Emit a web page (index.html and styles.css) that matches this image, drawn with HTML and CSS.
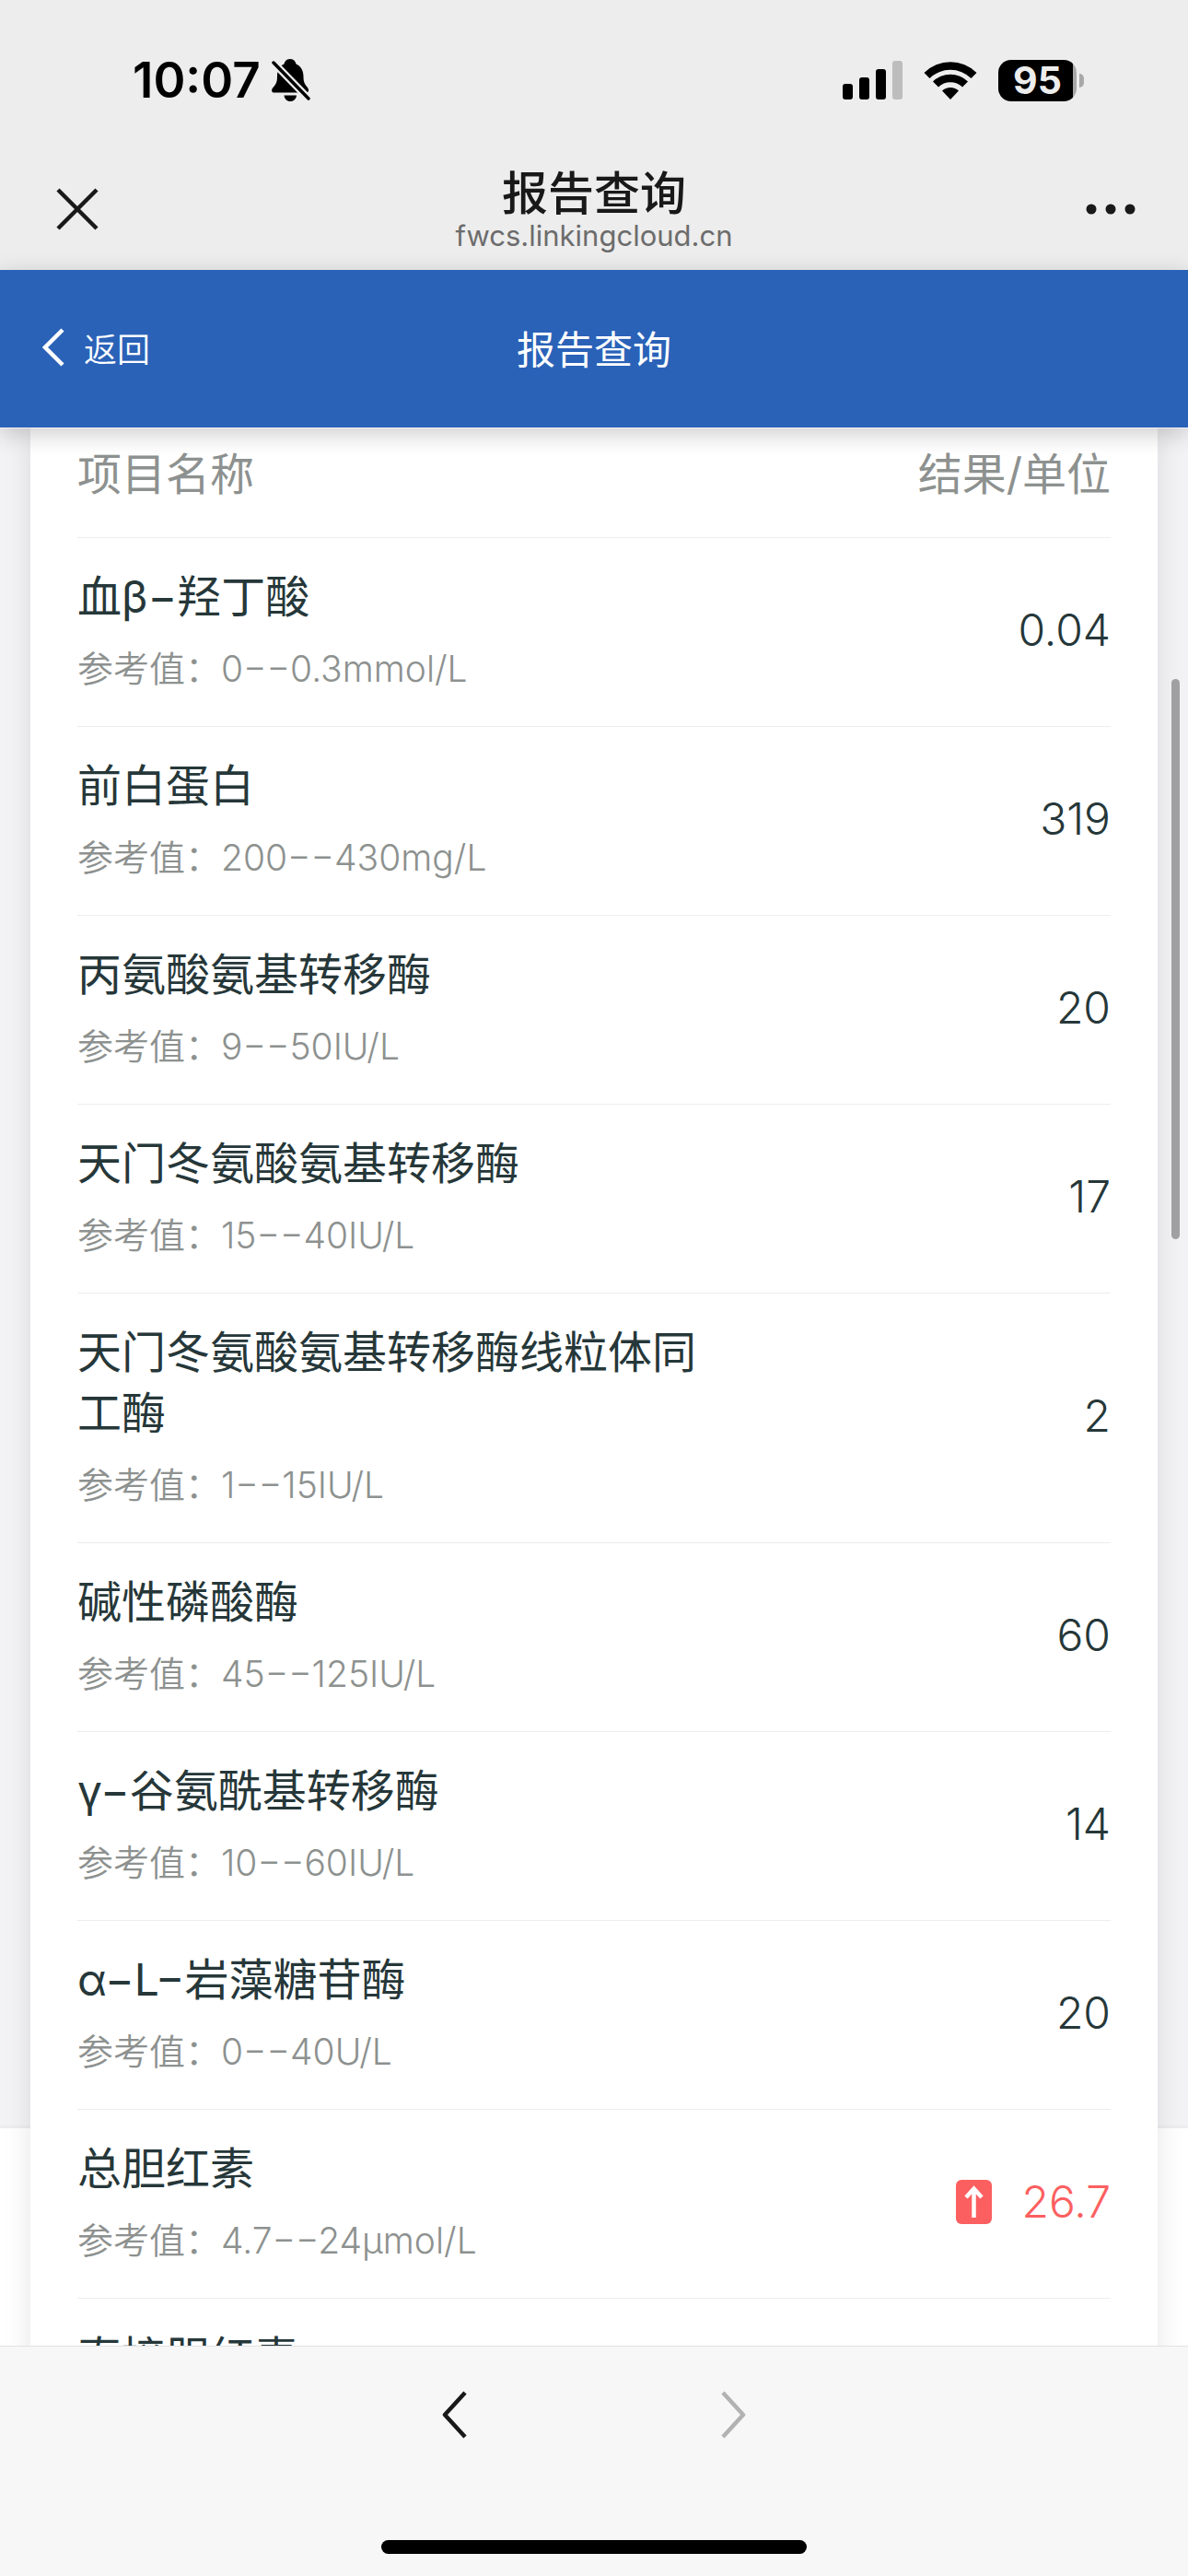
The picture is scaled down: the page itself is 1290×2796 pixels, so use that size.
FILE: index.html
```html
<!DOCTYPE html>
<html lang="zh-CN">
<head>
<meta charset="utf-8">
<meta name="viewport" content="width=device-width, initial-scale=1">
<title>报告查询</title>
<link rel="stylesheet" href="styles.css">
</head>
<body>
<div class="screen">
  <div class="status-bar">
    <div class="status-left">
      <span class="clock">10:07</span>
      <svg class="bell" width="42" height="46" viewBox="0 0 42 46" aria-label="静音">
        <path d="M20 0C16 0 14 3 13.500 5.500C8 8 6 13 6 19C6 26 4 28 1.500 31C-1 34 0 36.500 3 36.500H37C40 36.500 41 34 39 31C36.500 28 34.500 26 34.500 19C34.500 13 32 8 26.500 5.500C26 3 24 0 20 0Z"/>
        <path d="M13.500 39.500H27C26.500 43.500 24 46 20.200 46C16.500 46 14 43.500 13.500 39.500Z"/>
        <path d="M1 3L41 44" fill="none" stroke="#ededed" stroke-width="8"/>
        <path d="M2 4L40 43" fill="none" stroke="#000" stroke-width="3.500" stroke-linecap="round"/>
      </svg>
    </div>
    <div class="status-right">
      <svg width="65" height="42" viewBox="0 0 65 42" aria-label="信号">
        <rect x="0" y="25" width="11" height="17" rx="3"/>
        <rect x="18" y="18" width="11" height="24" rx="3"/>
        <rect x="36" y="9" width="11" height="33" rx="3"/>
        <rect x="54" y="0" width="11" height="42" rx="3" fill="#bdbdbd"/>
      </svg>
      <svg width="58" height="42" viewBox="0 0 58 42" aria-label="无线网络">
        <path d="M0.500 13A40.500 40.500 0 0 1 57.500 13L51.500 19A32 32 0 0 0 6.500 19Z"/>
        <path d="M10 22.500A27 27 0 0 1 48 22.500L42 28.500A18.500 18.500 0 0 0 16 28.500Z"/>
        <path d="M20 32.500A13 13 0 0 1 38 32.500L29 42Z"/>
      </svg>
      <div class="battery"><span class="battery-body">95</span><span class="battery-cap"></span></div>
    </div>
  </div>

  <div class="nav-bar">
    <button class="icon-button" type="button" aria-label="关闭">
      <svg width="46" height="46" viewBox="0 0 46 46" fill="none" stroke="#191919" stroke-width="4.500"><path d="M2 2L44 44M44 2L2 44"/></svg>
    </button>
    <div class="nav-title">
      <div class="page-name">报告查询</div>
      <div class="page-host">fwcs.linkingcloud.cn</div>
    </div>
    <button class="icon-button" type="button" aria-label="更多">
      <svg width="54" height="12" viewBox="0 0 54 12" fill="#191919"><circle cx="6" cy="6" r="5.500"/><circle cx="27" cy="6" r="5.500"/><circle cx="48" cy="6" r="5.500"/></svg>
    </button>
  </div>

  <header class="app-bar">
    <a class="back-link" href="#">
      <svg width="24" height="42" viewBox="0 0 24 42" fill="none" stroke="#fff" stroke-width="4.500"><path d="M22 2L3 21L22 40"/></svg>
      返回
    </a>
    <h1 class="app-title">报告查询</h1>
  </header>

  <main class="report">
    <div class="card">
      <table class="results">
        <thead>
          <tr><th scope="col">项目名称</th><th scope="col">结果/单位</th></tr>
        </thead>
        <tbody>
          <tr><td><div class="name">血β−羟丁酸</div><div class="range">参考值：0−−0.3mmol/L</div></td><td>0.04</td></tr>
          <tr><td><div class="name">前白蛋白</div><div class="range">参考值：200−−430mg/L</div></td><td>319</td></tr>
          <tr><td><div class="name">丙氨酸氨基转移酶</div><div class="range">参考值：9−−50IU/L</div></td><td>20</td></tr>
          <tr><td><div class="name">天门冬氨酸氨基转移酶</div><div class="range">参考值：15−−40IU/L</div></td><td>17</td></tr>
          <tr><td><div class="name">天门冬氨酸氨基转移酶线粒体同工酶</div><div class="range">参考值：1−−15IU/L</div></td><td>2</td></tr>
          <tr><td><div class="name">碱性磷酸酶</div><div class="range">参考值：45−−125IU/L</div></td><td>60</td></tr>
          <tr><td><div class="name">γ−谷氨酰基转移酶</div><div class="range">参考值：10−−60IU/L</div></td><td>14</td></tr>
          <tr><td><div class="name">α−L−岩藻糖苷酶</div><div class="range">参考值：0−−40U/L</div></td><td>20</td></tr>
          <tr><td><div class="name">总胆红素</div><div class="range">参考值：4.7−−24μmol/L</div></td><td>
            <div class="flagged">
              <svg width="39" height="48" viewBox="0 0 39 48" aria-label="偏高"><rect width="39" height="48" rx="6" fill="#fc5f60"/><path d="M19.500 41V10M11 19L19.500 9.500L28 19" fill="none" stroke="#fff" stroke-width="4.500"/></svg>
              26.7
            </div></td></tr>
          <tr><td><div class="name">直接胆红素</div></td><td></td></tr>
        </tbody>
      </table>
    </div>
    <div class="scroll-thumb"></div>
  </main>

  <footer class="tool-bar">
    <div class="tool-buttons">
      <button class="tool-button" type="button" aria-label="后退">
        <svg width="27" height="52" viewBox="0 0 27 52" fill="none" stroke="#191919" stroke-width="4.500" stroke-linejoin="round"><path d="M25 2L3 26L25 50"/></svg>
      </button>
      <button class="tool-button" type="button" aria-label="前进" disabled>
        <svg width="27" height="52" viewBox="0 0 27 52" fill="none" stroke="#b2b2b2" stroke-width="4.500" stroke-linejoin="round"><path d="M2 2L24 26L2 50"/></svg>
      </button>
    </div>
    <div class="home-indicator"></div>
  </footer>
</div>
</body>
</html>
```
FILE: styles.css
```css
* { box-sizing: border-box; }

body {
  margin: 0;
  font-family: Inter, "Noto Sans CJK SC", sans-serif;
  color: #263739;
  background: #fff;
}

svg { display: block; flex: none; }

.screen {
  display: flex;
  flex-direction: column;
  height: 100vh;
  overflow: hidden;
}

/* Phone status bar */
.status-bar {
  flex: none;
  display: flex;
  justify-content: space-between;
  align-items: center;
  height: 161px;
  padding: 13px 113px 0 144px;
  background: #ededed;
  color: #000;
}
.status-left { display: flex; align-items: center; gap: 12px; }
.status-right { display: flex; align-items: center; gap: 23px; }
.clock { font-size: 53px; font-weight: 600; line-height: 60px; }
.battery { display: flex; align-items: center; gap: 3px; }
.battery-body {
  width: 85px;
  height: 45px;
  border-radius: 14px;
  background: linear-gradient(to right, #000 81px, #a8a8a8 81px);
  color: #ededed;
  font-size: 41px;
  font-weight: 700;
  line-height: 45px;
  text-align: center;
}
.battery-cap { width: 5px; height: 15px; border-radius: 0 5px 5px 0; background: #a8a8a8; }

/* Browser title bar */
.nav-bar {
  flex: none;
  display: flex;
  justify-content: space-between;
  align-items: center;
  height: 132px;
  padding: 0 54px;
  background: #ededed;
}
.icon-button,
.tool-button { padding: 0; border: 0; background: none; }
.icon-button { display: flex; justify-content: center; width: 60px; }
.nav-title { text-align: center; }
.page-name { font-size: 50px; font-weight: 500; line-height: 58px; color: #191919; }
.page-host { font-size: 31px; font-weight: 400; line-height: 34px; color: #6c6c6c; }

/* Application header */
.app-bar {
  flex: none;
  position: relative;
  z-index: 1;
  display: grid;
  grid-template-columns: 1fr auto 1fr;
  align-items: center;
  height: 172px;
  padding: 0 46px 4px;
  background: #2a62b8;
  border-bottom: 1px solid #f1eff6;
  box-shadow: 0 6px 24px rgba(0, 0, 0, 0.2);
  color: #fff;
}
.back-link {
  display: flex;
  align-items: center;
  gap: 21px;
  color: inherit;
  font-size: 36px;
  font-weight: 350;
  text-decoration: none;
}
.app-title { margin: 0; font-size: 42px; font-weight: 400; }

/* Report */
.report {
  flex: 1;
  position: relative;
  min-height: 0;
  overflow: hidden;
  padding: 0 33px;
  background:
    linear-gradient(#f3f3f6, #f3f3f6) no-repeat 0 0 / 100% 1842px,
    linear-gradient(#ededf0, #ededf0) no-repeat 0 0 / 100% 1845px,
    #fff;
}
.card {
  padding: 0 51px;
  background: #fff;
  box-shadow: 0 0 30px rgba(0, 0, 0, 0.1);
}
.results { width: 100%; border-spacing: 0; font-size: 48px; line-height: 66px; }
.results th { padding: 17px 0 35px; border-bottom: 1px solid #ededed; color: #8d918f; font-weight: 400; text-align: left; }
.results td { padding: 31px 0 35px; border-bottom: 1px solid #ededed; }
.results th:first-child { width: 60%; }
.results th:last-child,
.results td:last-child { text-align: right; }
.results td:last-child { font-weight: 350; }
.range { margin-top: 18px; font-size: 39px; font-weight: 350; line-height: 54px; color: #8d918f; }
.flagged { display: flex; justify-content: flex-end; align-items: center; gap: 33px; color: #fc5f60; }
.scroll-thumb {
  position: absolute;
  top: 272px;
  right: 9px;
  width: 9px;
  height: 608px;
  border-radius: 5px;
  background: #a0a0a2;
}

/* Browser toolbar */
.tool-bar {
  flex: none;
  display: flex;
  flex-direction: column;
  align-items: center;
  justify-content: space-between;
  height: 250px;
  padding: 48px 0 24px;
  border-top: 1px solid #e2e2e2;
  background: #f7f7f7;
}
.tool-buttons { display: flex; gap: 276px; }
.home-indicator { width: 462px; max-width: 60%; height: 15px; border-radius: 8px; background: #000; }
```
